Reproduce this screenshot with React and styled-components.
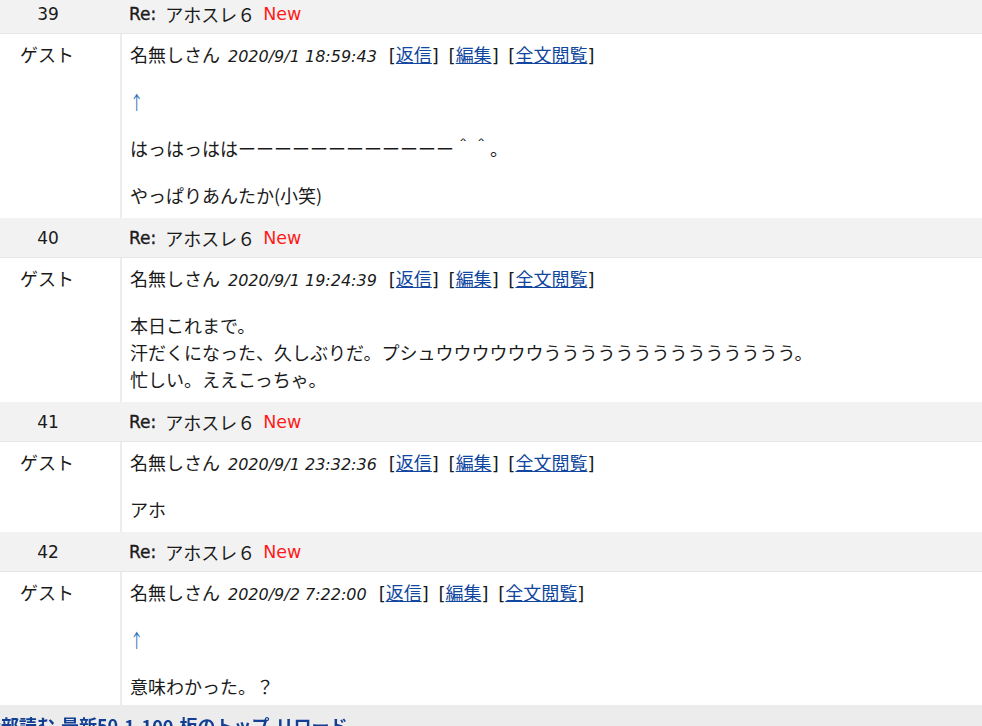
import styled, { createGlobalStyle } from "styled-components";

const GlobalStyle = createGlobalStyle`
  html, body {
    margin: 0;
    padding: 0;
    background: #ffffff;
    overflow: hidden;
  }
  body {
    font-family: "Noto Sans CJK JP", sans-serif;
    color: #1a1a1a;
  }
`;

const posts = [
  {
    no: 39,
    date: "2020/9/1 18:59:43",
    paragraphs: [["↑"], ["はっはっははーーーーーーーーーーーー＾＾。"], ["やっぱりあんたか(小笑)"]],
  },
  {
    no: 40,
    date: "2020/9/1 19:24:39",
    paragraphs: [
      [
        "本日これまで。",
        "汗だくになった、久しぶりだ。プシュウウウウウウうううううううううううううう。",
        "忙しい。ええこっちゃ。",
      ],
    ],
  },
  {
    no: 41,
    date: "2020/9/1 23:32:36",
    paragraphs: [["アホ"]],
  },
  {
    no: 42,
    date: "2020/9/2 7:22:00",
    paragraphs: [["↑"], ["意味わかった。？"]],
  },
];

export default function App() {
  return (
    <>
      <GlobalStyle />
      <Board>
        {posts.map((post) => (
          <Post key={post.no}>
            <HeadNo>{post.no}</HeadNo>
            <HeadTitle>
              <Latin>Re:</Latin>
              <Subject>アホスレ６</Subject>
              <NewMark>New</NewMark>
            </HeadTitle>
            <Author>ゲスト</Author>
            <Body>
              <NameLine>
                名無しさん<DateText>{post.date}</DateText>
                <Links>
                  [<LinkText href="#">返信</LinkText>] [<LinkText href="#">編集</LinkText>] [
                  <LinkText href="#">全文閲覧</LinkText>]
                </Links>
              </NameLine>
              {post.paragraphs.map((lines, i) => (
                <Paragraph key={i}>
                  {lines.map((line, j) =>
                    line === "↑" ? (
                      <Line key={j}>
                        <Arrow>{line}</Arrow>
                      </Line>
                    ) : (
                      <Line key={j}>{line}</Line>
                    )
                  )}
                </Paragraph>
              ))}
            </Body>
          </Post>
        ))}
      </Board>
      <Footer>
        <FooterInner>
          <FooterLink href="#">全部読む</FooterLink>
          <FooterLink href="#">最新50</FooterLink>
          <FooterLink href="#">1-100</FooterLink>
          <FooterLink href="#">板のトップ</FooterLink>
          <FooterLink href="#">リロード</FooterLink>
        </FooterInner>
      </Footer>
    </>
  );
}

const Board = styled.div`
  margin-top: -6px;
  display: flex;
  flex-direction: column;
`;

const Post = styled.div`
  display: grid;
  grid-template-columns: 122px 1fr;
`;

const HeadNo = styled.div`
  height: 39px;
  border-bottom: 1px solid #e6e6e6;
  background: #f2f2f2;
  padding-right: 26px;
  display: flex;
  align-items: center;
  justify-content: center;
  font-family: "DejaVu Sans", "Noto Sans CJK JP", sans-serif;
  font-size: 17px;
  color: #1a1a1a;
`;

const HeadTitle = styled.div`
  height: 39px;
  border-bottom: 1px solid #e6e6e6;
  background: #f2f2f2;
  display: flex;
  align-items: center;
  padding-left: 7px;
  white-space: nowrap;
`;

const Latin = styled.span`
  font-family: "DejaVu Sans", sans-serif;
  font-size: 17px;
  -webkit-text-stroke: 0.35px #1a1a1a;
`;

const Subject = styled.span`
  margin-left: 9px;
  font-size: 18px;
  line-height: 1;
`;

const NewMark = styled.span`
  margin-left: 8px;
  font-family: "DejaVu Sans", sans-serif;
  font-size: 17.5px;
  color: #ff1a1a;
`;

const Author = styled.div`
  padding: 7px 26px 0 0;
  border-right: 2px solid #ececec;
  text-align: center;
  font-size: 18px;
  line-height: 27px;
`;

const Body = styled.div`
  padding: 7px 8px 9px 8px;
  font-size: 18px;
  line-height: 27px;
  display: flex;
  flex-direction: column;
  gap: 20px;
`;

const NameLine = styled.div`
  height: 27px;
  white-space: nowrap;
`;

const DateText = styled.span`
  margin-left: 8px;
  font-family: "DejaVu Sans", sans-serif;
  font-style: italic;
  font-size: 16px;
  line-height: 0;
`;

const Links = styled.span`
  margin-left: 12px;
  font-family: "DejaVu Sans", "Noto Sans CJK JP", sans-serif;
  font-size: 18px;
  line-height: 0;
  word-spacing: 4px;
`;

const LinkText = styled.a`
  color: #11479e;
  text-decoration: underline;
  font-family: "Noto Sans CJK JP", sans-serif;
`;

const Paragraph = styled.div`
  display: flex;
  flex-direction: column;
`;

const Line = styled.div`
  height: 27px;
  white-space: nowrap;
`;

const Arrow = styled.span`
  display: inline-block;
  color: #2870b8;
  font-size: 19px;
  line-height: 27px;
  transform: scaleX(0.7);
  transform-origin: left center;
`;

const Footer = styled.div`
  position: fixed;
  left: 0;
  right: 0;
  top: 705px;
  height: 40px;
  background: #ececec;
`;

const FooterInner = styled.div`
  display: flex;
  gap: 6px;
  margin-left: -17px;
  padding-top: 7px;
`;

const FooterLink = styled.a`
  color: #123f93;
  font-weight: 700;
  font-size: 18px;
  line-height: 27px;
  text-decoration: none;
  white-space: nowrap;
`;
